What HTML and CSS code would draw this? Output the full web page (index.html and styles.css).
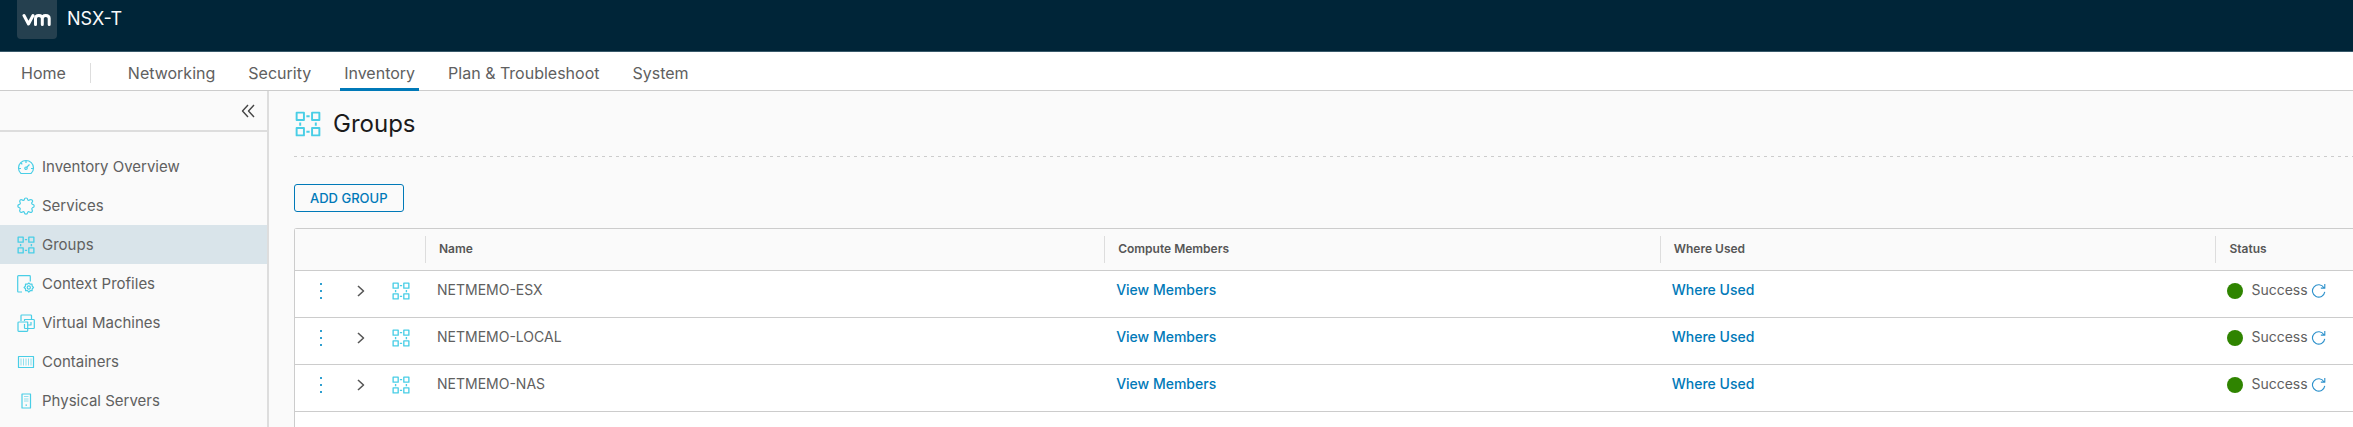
FILE: index.html
```html
<!DOCTYPE html>
<html lang="en">
<head>
<meta charset="utf-8">
<title>NSX-T</title>
<link rel="stylesheet" href="styles.css">
</head>
<body>
<svg class="sprite" aria-hidden="true">
  <symbol id="groups" viewBox="0 0 16 16"><path d="M1 1h4.5v4.500H1zM10.500 1H15v4.500h-4.500zM1 10.500h4.500V15H1zM10.500 10.500H15V15h-4.500zM7 3.200h2M7 12.800h2M3.200 7v2M12.800 7v2"/></symbol>
  <symbol id="refresh" viewBox="0 0 16 16"><path d="M13.800 5A6.600 6.600 0 1 0 14.700 9.500M14.700 1v4.500H10.500"/></symbol>
  <symbol id="dots" viewBox="0 0 4 16"><path d="M1 0h2v2H1zM1 7h2v2H1zM1 14h2v2H1z"/></symbol>
  <symbol id="chevron" viewBox="0 0 8 12"><path d="M1 1l5.500 5L1 11"/></symbol>
</svg>
<header class="header">
  <div class="logo"><svg viewBox="0 0 30 14" aria-label="vm" role="img"><path d="M2 2.500L6.500 11L11 2.500M13.500 11.500V5.500Q13.500 2.500 16.800 2.500Q20.300 2.500 20.300 5.500V11.500M20.300 5.500Q20.300 2.500 23.700 2.500Q27.200 2.500 27.200 5.500V11.500"/></svg></div>
  <span class="product">NSX-T</span>
</header>
<nav class="tabs" aria-label="Main">
  <a class="tab home" href="#">Home</a>
  <span class="divider"></span>
  <a class="tab" href="#">Networking</a>
  <a class="tab" href="#">Security</a>
  <a class="tab active" href="#" aria-current="page">Inventory</a>
  <a class="tab" href="#">Plan &amp; Troubleshoot</a>
  <a class="tab" href="#">System</a>
</nav>
<div class="layout">
  <aside class="sidebar">
    <div class="collapse-row">
      <button class="collapse" type="button" aria-label="Collapse navigation"><svg viewBox="0 0 14 14"><path d="M7 1L1.500 7L7 13M13 1L7.500 7L13 13"/></svg></button>
    </div>
    <nav class="menu" aria-label="Inventory">
      <a href="#"><svg class="icon" viewBox="0 0 18 18"><path d="M4 15.500h10Q16.500 13.500 16.500 10A7.500 7.500 0 0 0 1.500 10Q1.500 13.500 4 15.500zM9 3v2M4 5l1.300 1.300M2 10.500h2M14 10.500h2M12.500 6.500L9.500 9.500"/><circle cx="9" cy="10.200" r="1.200"/></svg>Inventory Overview</a>
      <a href="#"><svg class="icon" viewBox="0 0 18 18"><path d="M7.300 2.800Q7.400 1 9 1T10.700 2.800Q11.600 3.900 12.900 2.800Q14.200 2.200 15.200 3.200T14.800 5.500Q14.300 7 15.700 7.300Q17.200 7.500 17.200 9T15.500 10.700Q14.300 11.300 15 12.700Q16 14.200 14.900 15T12.600 15Q11.200 14 10.700 15.400Q10.500 17.100 9 17.100T7.300 15.400Q6.700 14 5.400 15Q4 16 3.100 14.900T3 12.700Q3.700 11.300 2.400 10.700Q.8 10.400.8 9T2.400 7.300Q3.800 6.900 3.100 5.400Q2.200 4 3.100 3.100T5.300 3Q6.700 4 7.300 2.800z"/></svg>Services</a>
      <a class="selected" href="#" aria-current="page"><svg class="icon"><use href="#groups"/></svg>Groups</a>
      <a href="#"><svg class="icon" viewBox="0 0 18 18"><path d="M5 17H1.500Q.7 17 .7 16.200V1.500Q.7.700 1.500.700h11Q13.300.700 13.300 1.500V6.500"/><circle cx="11.800" cy="12.500" r="1.600"/><path d="M11.800 8l1.300 1.100 1.900-.1.100 1.900L16.500 12.500l-1.300 1.300-.1 1.800-1.900.1L11.800 17l-1.300-1.300-1.900-.1-.1-1.800L7.100 12.500l1.300-1.400.1-1.900 1.900-.1z"/></svg>Context Profiles</a>
      <a href="#"><svg class="icon" viewBox="0 0 18 18"><path d="M4 7V1.700Q4 1 4.700 1h9Q14.500 1 14.500 1.700V5M7.500 7V5.500h9Q17.300 5.500 17.300 6.200v7.600Q17.300 14.500 16.500 14.500h-8.300Q7.500 14.500 7.500 13.800V10M1.500 8h9.200v8.500Q10.700 17.300 10 17.300H1.700Q1 17.300 1 16.500V8.700Q1 8 1.700 8M11 11h3V8"/></svg>Virtual Machines</a>
      <a href="#"><svg class="icon" viewBox="0 0 18 18"><path d="M1.500 3.500h15v11h-15z"/><path class="thin" d="M4 5.500v7M6.500 5.500v7M9 5.500v7M11.500 5.500v7M14 5.500v7"/></svg>Containers</a>
      <a href="#"><svg class="icon" viewBox="0 0 18 18"><path d="M5 2h8.500v14H5z"/><path class="thin" d="M7 4.500h4.500M7 7h4.500M7 9h4.500"/><path d="M8.500 13.200h1.500"/></svg>Physical Servers</a>
    </nav>
  </aside>
  <main class="main">
    <div class="heading"><svg class="heading-icon"><use href="#groups"/></svg><h1>Groups</h1></div>
    <div class="rule"></div>
    <button class="add" type="button">ADD GROUP</button>
    <div class="grid">
      <table>
        <colgroup><col class="c-tools"><col class="c-name"><col class="c-link"><col class="c-link"><col></colgroup>
        <thead><tr><td></td><th scope="col">Name</th><th scope="col">Compute Members</th><th scope="col">Where Used</th><th scope="col">Status</th></tr></thead>
        <tbody>
          <tr>
            <td><div class="tools"><button type="button" class="dots" aria-label="Actions"><svg><use href="#dots"/></svg></button><button type="button" class="chevron" aria-label="Expand"><svg><use href="#chevron"/></svg></button><svg class="icon"><use href="#groups"/></svg></div></td>
            <td>NETMEMO-ESX</td><td><a href="#">View Members</a></td><td><a href="#">Where Used</a></td>
            <td><div class="status"><span class="light"></span>Success<button type="button" class="refresh" aria-label="Refresh"><svg><use href="#refresh"/></svg></button></div></td>
          </tr>
          <tr>
            <td><div class="tools"><button type="button" class="dots" aria-label="Actions"><svg><use href="#dots"/></svg></button><button type="button" class="chevron" aria-label="Expand"><svg><use href="#chevron"/></svg></button><svg class="icon"><use href="#groups"/></svg></div></td>
            <td>NETMEMO-LOCAL</td><td><a href="#">View Members</a></td><td><a href="#">Where Used</a></td>
            <td><div class="status"><span class="light"></span>Success<button type="button" class="refresh" aria-label="Refresh"><svg><use href="#refresh"/></svg></button></div></td>
          </tr>
          <tr>
            <td><div class="tools"><button type="button" class="dots" aria-label="Actions"><svg><use href="#dots"/></svg></button><button type="button" class="chevron" aria-label="Expand"><svg><use href="#chevron"/></svg></button><svg class="icon"><use href="#groups"/></svg></div></td>
            <td>NETMEMO-NAS</td><td><a href="#">View Members</a></td><td><a href="#">Where Used</a></td>
            <td><div class="status"><span class="light"></span>Success<button type="button" class="refresh" aria-label="Refresh"><svg><use href="#refresh"/></svg></button></div></td>
          </tr>
        </tbody>
      </table>
    </div>
  </main>
</div>
</body>
</html>
```
FILE: styles.css
```css
* { box-sizing: border-box; }
body {
  margin: 0;
  min-height: 100vh;
  display: flex;
  flex-direction: column;
  background: #fafafa;
  color: #606060;
  font-family: Inter, "Open Sans", sans-serif;
  font-size: 15px;
  line-height: 20px;
}
a { color: inherit; text-decoration: none; }
button { margin: 0; padding: 0; border: 0; background: none; font: inherit; cursor: pointer; }
svg { display: block; fill: none; stroke: #49cee6; stroke-width: 1.2; stroke-linejoin: round; }
.sprite { display: none; }

.header {
  display: flex;
  gap: 10px;
  height: 52px;
  padding-left: 17px;
  background: #002538;
  border-bottom: 1px solid #38596a;
  color: #fafafa;
}
.logo {
  display: flex;
  align-items: center;
  justify-content: center;
  width: 40px;
  height: 39px;
  border-radius: 0 0 4px 4px;
  background: #25404f;
}
.logo svg { width: 30px; height: 14px; stroke: #fff; stroke-width: 3; stroke-linecap: round; }
.product { font-size: 18px; line-height: 37px; }

.tabs {
  display: flex;
  height: 39px;
  padding-left: 17px;
  background: #fff;
  border-bottom: 1px solid #ccc;
  font-size: 16px;
}
.tab { height: 39px; margin-right: 25px; padding: 0 4px; line-height: 42px; }
.tab.home { margin-right: 20px; }
.tab.active { border-bottom: 3px solid #0079b8; }
.divider { width: 1px; height: 20px; margin: 11px 33px 0 0; background: #ddd; }

.layout { flex: 1; display: flex; }
.sidebar { flex: none; width: 269px; border-right: 2px solid #ddd; }
.collapse-row { display: flex; justify-content: flex-end; align-items: center; height: 41px; padding-right: 12px; border-bottom: 2px solid #ddd; }
.collapse svg { width: 14px; height: 14px; stroke: #454545; stroke-width: 1.4; }
.menu { padding-top: 15px; }
.menu a { display: flex; align-items: center; gap: 7px; height: 39px; padding-left: 17px; }
.menu .selected { background: #d9e4ea; }
.icon { width: 18px; height: 18px; }
.thin { stroke-width: 1; opacity: .6; }

.main { flex: 1; min-width: 0; display: flex; flex-direction: column; align-items: stretch; padding: 16px 0 0 25px; }
.heading { display: flex; align-items: center; gap: 12px; height: 34px; padding-left: 1px; }
.heading-icon { width: 26px; height: 26px; }
h1 { margin: 0; font-size: 24px; line-height: 34px; font-weight: 400; color: #1b1b1b; }
.rule { height: 1px; margin-top: 15px; background: repeating-linear-gradient(90deg, #ccc 0 3px, transparent 3px 7px); }
.add { align-self: flex-start; height: 28px; margin: 27px 0 16px; padding: 0 15px; border: 1px solid #0079b8; border-radius: 3px; color: #0079b8; font-size: 13px; font-weight: 500; }
.grid { flex: 1; border: solid #ccc; border-width: 1px 0 0 1px; border-radius: 3px 0 0 0; background: #fff; }
table { width: 100%; table-layout: fixed; border-collapse: collapse; font-size: 14px; }
.c-tools { width: 130px; }
.c-name { width: 33%; }
.c-link { width: 27%; }
thead { background: #fafafa; }
thead tr { height: 41px; border-bottom: 1px solid #ccc; }
th { padding: 0; text-align: left; font-size: 12px; font-weight: 600; color: #565656; }
th::before { content: ""; display: inline-block; width: 1px; height: 27px; margin-right: 13px; background: #ddd; vertical-align: middle; }
tbody tr { height: 47px; border-bottom: 1px solid #ccc; }
tbody td { padding: 0 0 8px 12px; }
tbody a { color: #0079b8; font-weight: 500; }
.tools { display: flex; align-items: center; padding: 3px 0 0 12px; }
.dots { margin-right: 34px; }
.dots svg { width: 4px; height: 16px; fill: #2f9fd0; stroke: none; }
.chevron { margin-right: 27px; }
.chevron svg { width: 8px; height: 12px; stroke: #565656; stroke-width: 1.6; }
.status { display: flex; align-items: center; }
.light { width: 16px; height: 16px; margin: 3px 8px 0 0; border-radius: 50%; background: #2f8400; }
.refresh { margin: 2px 0 0 3px; }
.refresh svg { width: 15px; height: 15px; stroke: #2f92cc; }
```
